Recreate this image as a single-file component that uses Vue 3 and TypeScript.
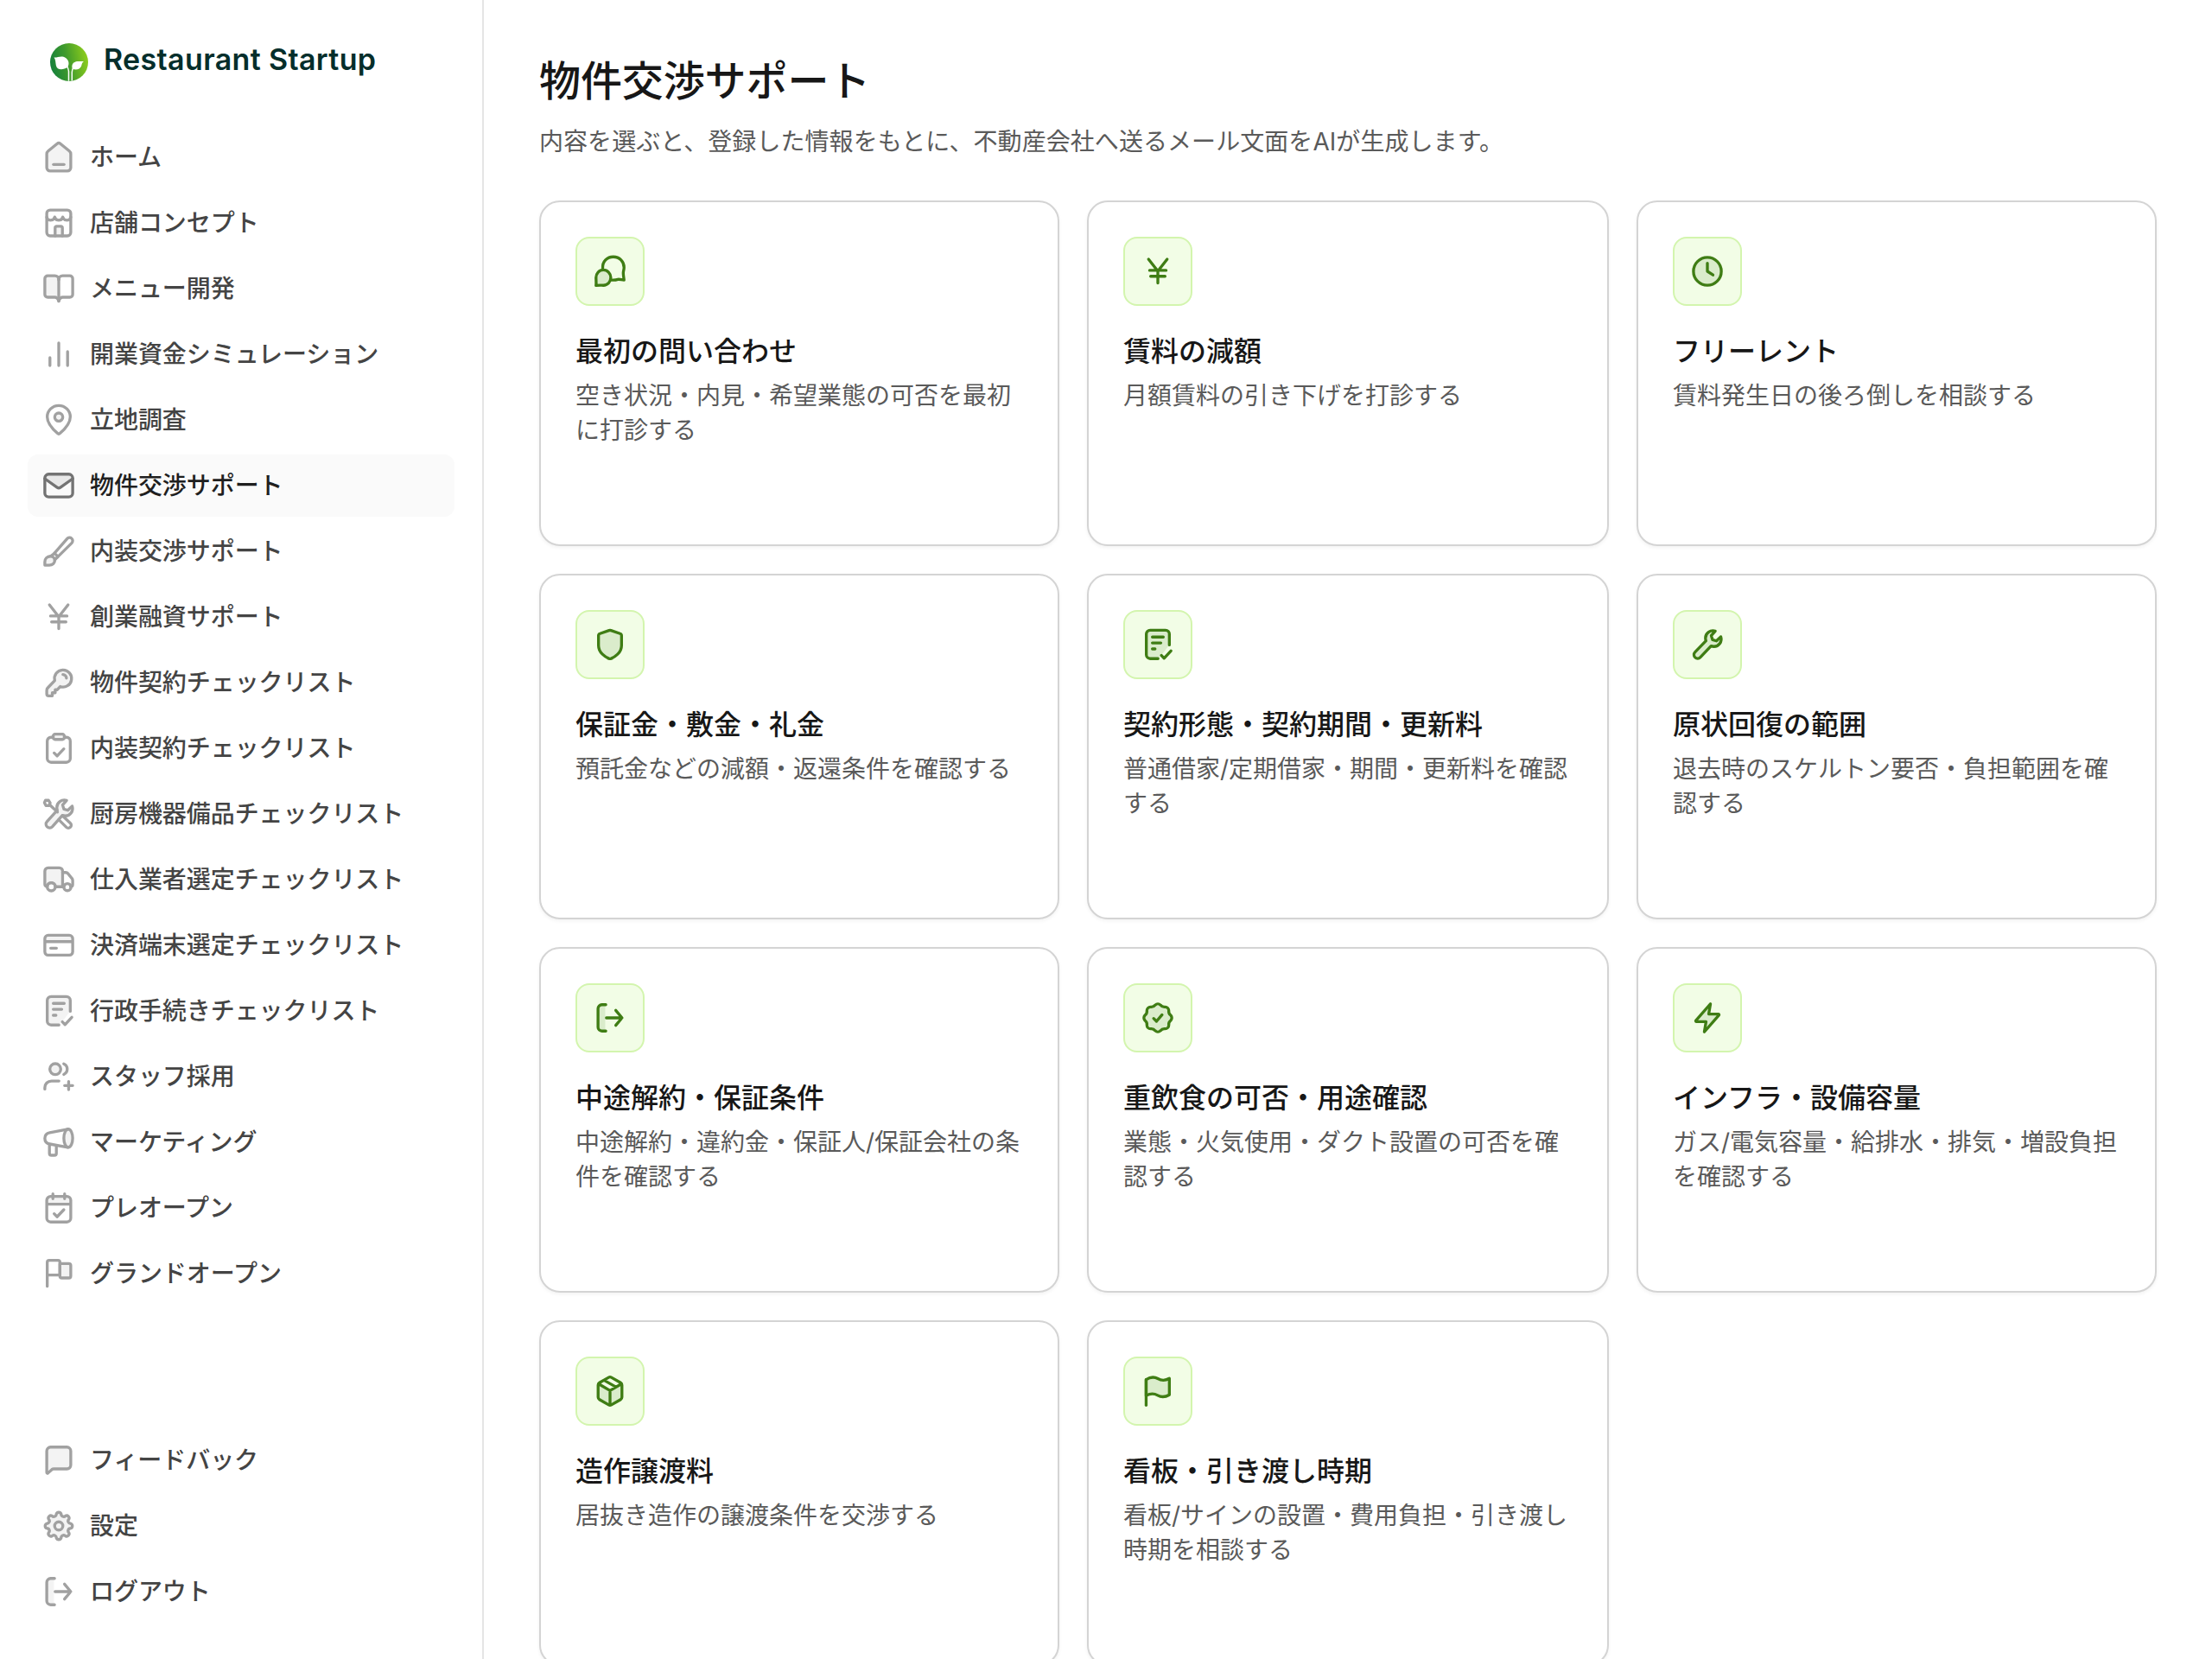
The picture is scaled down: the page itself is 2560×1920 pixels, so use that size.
<script setup lang="ts">
import { h, type FunctionalComponent } from 'vue'

interface Shape {
  d: string
  tint?: boolean
  bare?: boolean
}

// Circle and ellipse written as path data so that every icon is a list of paths.
const oval = (cx: number, cy: number, rx: number, ry: number = rx): string =>
  `M${cx - rx} ${cy}a${rx} ${ry} 0 1 1 ${rx * 2} 0a${rx} ${ry} 0 1 1 ${-rx * 2} 0Z`

// Ring of eight lobes built from alternating convex and concave arcs.
const lobes = (base: number, outer: number, inner: number): string => {
  const point = (i: number): string => {
    const a = ((i * 22.5 - 101.25) * Math.PI) / 180
    return `${(9 + base * Math.cos(a)).toFixed(3)} ${(9 + base * Math.sin(a)).toFixed(3)}`
  }
  let d = `M${point(0)}`
  for (let i = 1; i <= 16; i++) {
    d += i % 2 ? `A${outer} ${outer} 0 0 1 ${point(i)}` : `A${inner} ${inner} 0 0 0 ${point(i)}`
  }
  return d + 'Z'
}

const icons: Record<string, Shape[]> = {
  home: [
    { d: 'M3.5 5.75L8.2 1.9c.47-.38 1.13-.38 1.6 0l4.7 3.85c.47.38.75.95.75 1.55V14.4a1.75 1.75 0 0 1-1.75 1.75h-9A1.75 1.75 0 0 1 2.75 14.4V7.3c0-.6.28-1.17.75-1.55Z', tint: true },
    { d: 'M6.25 12.75h5.5' },
  ],
  store: [
    { d: 'M4.5 2.3h9a1.75 1.75 0 0 1 1.75 1.75v9.95a1.75 1.75 0 0 1-1.75 1.75h-9A1.75 1.75 0 0 1 2.75 14V4.05A1.75 1.75 0 0 1 4.5 2.3Z' },
    { d: 'M2.75 6c.2 1 .95 1.6 1.95 1.6S6.6 7 6.9 5.9C7.1 7 8 7.6 9 7.6s1.9-.6 2.1-1.7c.3 1.1 1.2 1.7 2.2 1.7s1.75-.6 1.95-1.6' },
    { d: 'M7.1 15.75v-4.1c0-.5.4-.9.9-.9h2c.5 0 .9.4.9.9v4.1', tint: true },
  ],
  book: [
    { d: 'M9 4.25C9 3.1 8.2 2.3 7 2.3H3.25c-.83 0-1.5.67-1.5 1.5v8.2c0 .83.67 1.5 1.5 1.5H6.9c1.1 0 1.7.75 2.1 2', tint: true },
    { d: 'M9 4.25c0-1.15.8-1.95 2-1.95h3.75c.83 0 1.5.67 1.5 1.5v8.2c0 .83-.67 1.5-1.5 1.5H11.1c-1.1 0-1.7.75-2.1 2' },
    { d: 'M9 4.25V15' },
  ],
  bars: [{ d: 'M4.4 10.75v4.1M9 3.1v11.75M13.6 7.6v7.25' }],
  pin: [
    { d: 'M15 7.4c0 3.5-3.9 7.3-5.4 8.6a.9.9 0 0 1-1.2 0C6.9 14.7 3 10.9 3 7.4a6 5.9 0 0 1 12 0Z' },
    { d: oval(9, 7.5, 2.1), tint: true },
  ],
  mail: [
    { d: 'M1.75 5.4L8.25 9.8c.45.3 1.05.3 1.5 0L16.25 5.4V5a2 2 0 0 0-2-2H3.75a2 2 0 0 0-2 2Z', tint: true, bare: true },
    { d: 'M3.75 3.05h10.5a2 2 0 0 1 2 2v7.85a2 2 0 0 1-2 2H3.75a2 2 0 0 1-2-2V5.05a2 2 0 0 1 2-2Z' },
    { d: 'M1.75 5.4L8.15 9.95c.5.35 1.2.35 1.7 0L16.25 5.4' },
  ],
  brush: [
    { d: 'M6.7 10.1L13.3 2.55c.7-.8 1.7-.9 2.4-.25.75.7.7 1.75 0 2.5L8.4 12' },
    { d: 'M4.7 11.6c-1.75.1-2.95 1.2-2.95 2.9v1.75h2.3c1.75 0 2.9-1 2.9-2.6 0-1.1-1-2.1-2.25-2.05Z', tint: true },
    { d: 'M4.9 11.5l1.8-1.4c.8.3 1.4 1 1.7 1.9l-1.5 1.5' },
  ],
  yen: [{ d: 'M4.15 2.7L9 8.9l4.85-6.2M9 8.9V15.1M4.7 8.5h8.6M5.25 11.6h7.5' }],
  key: [
    { d: 'M6.9 7.9L3.3 11.7c-.35.35-.55.8-.55 1.3v1.9c0 .55.45 1 1 1h1.9v-1.6h1.5v-1.6h1.1l1.5-1.65A4.45 4.45 0 1 0 6.9 7.9Z', tint: true },
    { d: 'M11.15 4.8a1.9 1.9 0 0 1 1.85 1.85' },
  ],
  clipboard: [
    { d: 'M6.1 3.25H5a2 2 0 0 0-2 2v9.05a2 2 0 0 0 2 2h8a2 2 0 0 0 2-2V5.25a2 2 0 0 0-2-2h-1.1' },
    { d: 'M7.05 1.65h3.9c.5 0 .95.45.95.95v.85c0 .5-.45.95-.95.95h-3.9c-.5 0-.95-.45-.95-.95V2.6c0-.5.45-.95.95-.95Z', tint: true },
    { d: 'M6.6 11.45l1.55 1.55 3.5-3.7' },
  ],
  tools: [
    { d: 'M2.1 1.85l1.6.05.85 1.45-.75 1.3-1.5-.05-.75-1.45ZM4.2 4.2l4.1 3.8' },
    { d: 'M10.9 9.9l4.15 3.95c.6.6.6 1.5 0 2.05s-1.5.6-2.1 0L9 12' },
    { d: 'M13.1 1.95C10.5 1.2 8 3.1 8 5.6c0 .5.1 1 .25 1.45L2.95 12.9c-.8.85-.75 2.05 0 2.8.8.75 2 .7 2.75-.1l5.2-5.85c.5.2 1 .25 1.5.25 2.6 0 4.4-2.5 3.6-5.1l-2.3 2.2-2-.6-.7-2.2Z', tint: true },
  ],
  truck: [
    { d: 'M3 12.7c-.7 0-1.25-.55-1.25-1.25V4.6c0-.95.75-1.7 1.7-1.7H9.3c.95 0 1.7.75 1.7 1.7v8.1H7.2a2.1 2.1 0 0 0-4.2 0Z', tint: true },
    { d: 'M11 5.3h1.6c.5 0 .95.2 1.25.6l1.95 2.4c.3.35.45.8.45 1.25v1.95c0 .75-.5 1.2-1.1 1.2M11 12.7h.7' },
    { d: oval(5.1, 12.75, 2.1) },
    { d: oval(13.5, 12.9, 1.85) },
  ],
  card: [
    { d: 'M3.5 3.8h11c.97 0 1.75.78 1.75 1.75V7.1H1.75V5.55c0-.97.78-1.75 1.75-1.75Z', tint: true, bare: true },
    { d: 'M3.5 3.8h11c.97 0 1.75.78 1.75 1.75v6.85c0 .97-.78 1.75-1.75 1.75h-11c-.97 0-1.75-.78-1.75-1.75V5.55c0-.97.78-1.75 1.75-1.75ZM1.75 7.1h14.5M4.8 10.5h3' },
  ],
  checklist: [
    { d: 'M15 9.1V3.5a2 2 0 0 0-2-2H5a2 2 0 0 0-2 2v10.8a2 2 0 0 0 2 2h4.2L12 13Z', tint: true, bare: true },
    { d: 'M15 9.2V3.5a2 2 0 0 0-2-2H5a2 2 0 0 0-2 2v10.8a2 2 0 0 0 2 2h4.1M6.15 5.05h5.7M6.15 8.15h4.4M6.15 11.25h1.4M10.9 14.65l1.35 1.45 3.55-3.8' },
  ],
  staff: [
    { d: oval(7.2, 5.1, 2.85), tint: true },
    { d: 'M11.6 2.35a3 3 0 0 1 0 5.5M1.75 15.5v-.75c0-2 1.5-3.45 3.45-3.45h3.9M14.15 11.55v4.2M12.05 13.65h4.2' },
  ],
  megaphone: [
    { d: 'M13.7 2.15L4.3 3.95C2.7 4.25 1.75 5.4 1.75 6.95s.95 2.65 2.55 2.95l9.4 1.75M4.15 9.9v4.85c0 .55.45 1 1 1h1.6c.55 0 1-.45 1-1v-4.2' },
    { d: oval(13.95, 6.9, 2.3, 4.75), tint: true },
  ],
  calendar: [
    { d: 'M2.75 7.05V5a2 2 0 0 1 2-2h8.5a2 2 0 0 1 2 2v2.05Z', tint: true, bare: true },
    { d: 'M4.75 3h8.5a2 2 0 0 1 2 2v9.3a2 2 0 0 1-2 2h-8.5a2 2 0 0 1-2-2V5a2 2 0 0 1 2-2ZM2.75 7.05h12.5M5.95 1.65v2.5M12.05 1.65v2.5M6.6 12l1.5 1.6 3.55-3.7' },
  ],
  banner: [
    { d: 'M3 15.6V3.1c0-.55.45-1 1-1h4.6c.55 0 1 .45 1 1v6.65H3' },
    { d: 'M9.6 3.8h4.65c.55 0 1 .45 1 1v5.45c0 .55-.45 1-1 1H10.6c-.55 0-1-.45-1-1Z', tint: true },
  ],
  chat: [{ d: 'M4.75 2.15h8.5a2 2 0 0 1 2 2v7.35a2 2 0 0 1-2 2H6.3c-.3 0-.6.1-.85.3l-2.1 1.9c-.25.2-.6.05-.6-.25V4.15a2 2 0 0 1 2-2Z', tint: true }],
  gear: [
    { d: lobes(6.35, 1.32, 1.32), tint: true },
    { d: oval(9, 9, 2.15) },
  ],
  exit: [
    { d: 'M6.5 2.15H4.75a2 2 0 0 0-2 2v9.7a2 2 0 0 0 2 2H6.5Z', tint: true, bare: true },
    { d: 'M6.8 2.15H4.75a2 2 0 0 0-2 2v9.7a2 2 0 0 0 2 2H6.8M7.1 9h8.1M12 5.1L15.25 9 12 12.9' },
  ],
  bubbles: [
    { d: 'M5.2 7.3C5 4 7.4 1.45 10.7 1.45s5.6 2.5 5.6 5.5c0 1.2-.4 1.9-.4 3 0 1.2.3 2.4.4 3.6-1.3-.1-2.2-.5-3.2-.35-1.2.35-2.3.45-3.6.25' },
    { d: 'M5.5 8.3c2.2 0 3.9 1.8 3.9 4s-1.7 4-3.9 4c-1.1 0-2.4-.1-3.8.1.2-1.4 0-2.9 0-4.1 0-2.2 1.6-4 3.8-4Z', tint: true },
  ],
  clock: [
    { d: oval(9, 9, 7.25), tint: true },
    { d: 'M9 4.75V9l2.9 1.9' },
  ],
  shield: [{ d: 'M9.5 1.65l4.7 1.6c.5.15.8.6.8 1.1v5.05c0 3.9-3.7 6.15-5.4 6.85-.4.15-.8.15-1.2 0C6.7 15.55 3 13.3 3 9.4V4.35c0-.5.3-.95.8-1.1l4.7-1.6c.3-.1.7-.1 1 0Z', tint: true }],
  wrench: [{ d: 'M13.1 1.95C10.5 1.2 8 3.1 8 5.6c0 .5.1 1 .25 1.45L2.6 12.9c-.8.85-.75 2.05 0 2.8.8.75 2 .7 2.75-.1l5.55-5.85c.5.2 1 .25 1.5.25 2.6 0 4.4-2.5 3.6-5.1l-2.3 2.2-2-.6-.7-2.2Z', tint: true }],
  badge: [
    { d: lobes(6.85, 1.9, 2.6), tint: true },
    { d: 'M6.8 9.3l1.5 1.5 2.9-3.4' },
  ],
  bolt: [{ d: 'M10.6 1.7L3 10.4c-.2.25 0 .6.3.6H8.3L7.4 16.3 15 7.6c.2-.25 0-.6-.3-.6H9.7Z', tint: true }],
  box: [
    { d: 'M2.8 5.2L9 8.8l6.2-3.6v7.6L9 16.4l-6.2-3.6Z', tint: true, bare: true },
    { d: 'M8.3 1.85L3.5 4.6c-.43.25-.7.7-.7 1.2v6.4c0 .5.27.95.7 1.2l4.8 2.75c.43.25.97.25 1.4 0l4.8-2.75c.43-.25.7-.7.7-1.2V5.8c0-.5-.27-.95-.7-1.2L9.7 1.85c-.43-.25-.97-.25-1.4 0ZM3 5.2l6 3.5 6-3.5M9 8.7v7.5M5.9 3.3l6.1 3.5' },
  ],
  flag: [
    { d: 'M2.9 3c2-1.3 4-1.7 6.1-.5s4 1 6-.1v8.5c-2 1.2-4 1.5-6.1.3s-4.1-.9-6 .1Z', tint: true },
    { d: 'M2.9 16.3V3' },
  ],
}

const Glyph: FunctionalComponent<{ name: string }> = (props) =>
  h(
    'svg',
    {
      viewBox: '0 0 18 18',
      width: 40,
      height: 40,
      fill: 'none',
      stroke: 'currentColor',
      'stroke-width': 1.5,
      'stroke-linecap': 'round',
      'stroke-linejoin': 'round',
    },
    icons[props.name].map((s) =>
      h('path', {
        d: s.d,
        fill: s.tint ? 'currentColor' : 'none',
        'fill-opacity': 0.13,
        stroke: s.bare ? 'none' : undefined,
      }),
    ),
  )
Glyph.props = ['name']

interface NavItem {
  icon: string
  label: string
  active?: boolean
}

const mainNav: NavItem[] = [
  { icon: 'home', label: 'ホーム' },
  { icon: 'store', label: '店舗コンセプト' },
  { icon: 'book', label: 'メニュー開発' },
  { icon: 'bars', label: '開業資金シミュレーション' },
  { icon: 'pin', label: '立地調査' },
  { icon: 'mail', label: '物件交渉サポート', active: true },
  { icon: 'brush', label: '内装交渉サポート' },
  { icon: 'yen', label: '創業融資サポート' },
  { icon: 'key', label: '物件契約チェックリスト' },
  { icon: 'clipboard', label: '内装契約チェックリスト' },
  { icon: 'tools', label: '厨房機器備品チェックリスト' },
  { icon: 'truck', label: '仕入業者選定チェックリスト' },
  { icon: 'card', label: '決済端末選定チェックリスト' },
  { icon: 'checklist', label: '行政手続きチェックリスト' },
  { icon: 'staff', label: 'スタッフ採用' },
  { icon: 'megaphone', label: 'マーケティング' },
  { icon: 'calendar', label: 'プレオープン' },
  { icon: 'banner', label: 'グランドオープン' },
]

const footNav: NavItem[] = [
  { icon: 'chat', label: 'フィードバック' },
  { icon: 'gear', label: '設定' },
  { icon: 'exit', label: 'ログアウト' },
]

const topics: { icon: string; title: string; text: string }[] = [
  { icon: 'bubbles', title: '最初の問い合わせ', text: '空き状況・内見・希望業態の可否を最初に打診する' },
  { icon: 'yen', title: '賃料の減額', text: '月額賃料の引き下げを打診する' },
  { icon: 'clock', title: 'フリーレント', text: '賃料発生日の後ろ倒しを相談する' },
  { icon: 'shield', title: '保証金・敷金・礼金', text: '預託金などの減額・返還条件を確認する' },
  { icon: 'checklist', title: '契約形態・契約期間・更新料', text: '普通借家/定期借家・期間・更新料を確認する' },
  { icon: 'wrench', title: '原状回復の範囲', text: '退去時のスケルトン要否・負担範囲を確認する' },
  { icon: 'exit', title: '中途解約・保証条件', text: '中途解約・違約金・保証人/保証会社の条件を確認する' },
  { icon: 'badge', title: '重飲食の可否・用途確認', text: '業態・火気使用・ダクト設置の可否を確認する' },
  { icon: 'bolt', title: 'インフラ・設備容量', text: 'ガス/電気容量・給排水・排気・増設負担を確認する' },
  { icon: 'box', title: '造作譲渡料', text: '居抜き造作の譲渡条件を交渉する' },
  { icon: 'flag', title: '看板・引き渡し時期', text: '看板/サインの設置・費用負担・引き渡し時期を相談する' },
]
</script>

<template>
  <div class="app">
    <aside class="sidebar">
      <a class="brand">
        <svg class="mark" viewBox="0 0 44 44" width="44" height="44">
          <defs>
            <linearGradient id="mark-fill" x1="0" y1="0.6" x2="1" y2="0.4">
              <stop offset="0" stop-color="#15803d" />
              <stop offset="0.45" stop-color="#3f9a2c" />
              <stop offset="1" stop-color="#8fce1c" />
            </linearGradient>
          </defs>
          <circle cx="22" cy="22" r="22" fill="url(#mark-fill)" />
          <path d="M4.5 16.5C8.500 17 13 13.500 18 17c3.500 2.500 4.500 6.500 2.500 10.500C15 31.500 8 31.500 6.800 25.500 6.200 22 6.500 19 4.500 16.500Z" fill="#fff" />
          <path d="M39 21c-4 .3-8.500-1.200-12 1.800-1.800 1.600-2 4.500-1.200 7 4.500 1.600 9 .4 10.400-3.600.7-2.300.8-3.800 2.800-5.200Z" fill="#fff" />
          <path d="M16.500 23.500c3 2 4.500 5 5 9v11.300M32.500 24.500c-4 1.300-7 4.500-7.200 9v10" fill="none" stroke="#fff" stroke-width="1.500" />
        </svg>
        <span class="brand-name">Restaurant Startup</span>
      </a>
      <nav class="nav">
        <a v-for="item in mainNav" :key="item.label" class="nav-item" :class="{ active: item.active }">
          <Glyph :name="item.icon" />
          <span>{{ item.label }}</span>
        </a>
      </nav>
      <nav class="nav nav-foot">
        <a v-for="item in footNav" :key="item.label" class="nav-item">
          <Glyph :name="item.icon" />
          <span>{{ item.label }}</span>
        </a>
      </nav>
    </aside>
    <main class="main">
      <h1>物件交渉サポート</h1>
      <p class="lead">内容を選ぶと、登録した情報をもとに、不動産会社へ送るメール文面をAIが生成します。</p>
      <div class="grid">
        <article v-for="topic in topics" :key="topic.title" class="topic">
          <div class="tile"><Glyph :name="topic.icon" /></div>
          <h2>{{ topic.title }}</h2>
          <p>{{ topic.text }}</p>
        </article>
      </div>
    </main>
  </div>
</template>

<style>
body {
  margin: 0;
  overflow: hidden;
  background: #fff;
}
</style>

<style scoped>
.app {
  display: flex;
  width: 2560px;
  height: 1920px;
  overflow: hidden;
  background: #fff;
  color: #171717;
  font-family: Inter, 'Noto Sans CJK JP', sans-serif;
}

.sidebar {
  box-sizing: border-box;
  flex: none;
  display: flex;
  flex-direction: column;
  width: 560px;
  height: 100%;
  padding: 50px 32px 42px;
  border-right: 2px solid #e5e5e5;
}

.brand {
  display: flex;
  align-items: center;
  gap: 18px;
  height: 44px;
  padding-left: 26px;
  margin-bottom: 52px;
}

.mark {
  flex: none;
}

.brand-name {
  color: #052e2b;
  font-size: 34px;
  font-weight: 600;
  line-height: 44px;
  letter-spacing: 0.35px;
  white-space: nowrap;
  margin-top: -6px;
}

.nav {
  display: flex;
  flex-direction: column;
  gap: 4px;
}

.nav-foot {
  margin-top: auto;
}

.nav-item {
  box-sizing: border-box;
  display: flex;
  align-items: center;
  gap: 16px;
  height: 72px;
  padding: 0 16px;
  border-radius: 12px;
  color: #444;
  font-size: 28px;
  font-weight: 500;
  line-height: 40px;
  letter-spacing: -0.06px;
  white-space: nowrap;
}

.nav-item svg {
  flex: none;
  color: #a1a1a1;
}

.nav-item.active {
  background: #fafafa;
  color: #1f1f1f;
}

.nav-item.active svg {
  color: #737373;
}

.main {
  box-sizing: border-box;
  flex: 1;
  min-width: 0;
  padding: 62px 64px 0;
}

h1 {
  margin: 0;
  font-size: 48px;
  font-weight: 500;
  line-height: 64px;
  letter-spacing: -0.1px;
}

.lead {
  margin: 18px 0 48px;
  color: #5a5a5a;
  font-size: 28px;
  line-height: 40px;
  letter-spacing: 0.06px;
}

.grid {
  display: grid;
  grid-template-columns: 602px 604px 602px;
  grid-auto-rows: 400px;
  gap: 32px;
}

.topic {
  box-sizing: border-box;
  padding: 40px;
  border: 2px solid #d4d4d4;
  border-radius: 24px;
  background: #fff;
  box-shadow: 0 2px 4px rgba(0, 0, 0, 0.05);
}

.tile {
  box-sizing: border-box;
  display: flex;
  align-items: center;
  justify-content: center;
  width: 80px;
  height: 80px;
  border: 2px solid #d3f5ae;
  border-radius: 16px;
  background: #f2fde6;
  color: #3f7d14;
}

h2 {
  margin: 29px 0 7px;
  font-size: 32px;
  font-weight: 500;
  line-height: 48px;
}

.topic p {
  margin: 0;
  color: #5a5a5a;
  font-size: 28px;
  line-height: 40px;
}
</style>
